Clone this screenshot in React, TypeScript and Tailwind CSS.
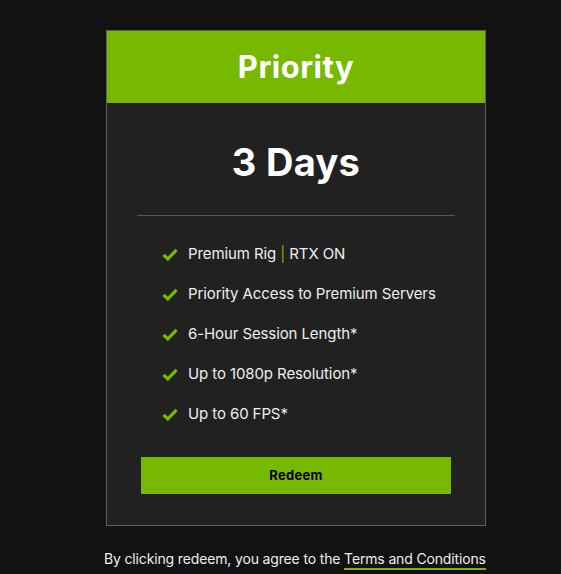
import React from "react";

const features: { text: React.ReactNode }[] = [
  {
    text: (
      <>
        Premium Rig <span className="text-[#76b900]">|</span> RTX ON
      </>
    ),
  },
  { text: "Priority Access to Premium Servers" },
  { text: "6-Hour Session Length*" },
  { text: "Up to 1080p Resolution*" },
  { text: "Up to 60 FPS*" },
];

const Check = () => (
  <svg width="16" height="13" viewBox="0 0 16 13" className="shrink-0">
    <path d="M1.5 6.8 L5.8 11 L14.5 1.8" fill="none" stroke="#76b900" strokeWidth="3.2" />
  </svg>
);

const App: React.FC = () => {
  return (
    <div
      className="w-[561px] h-[574px] bg-[#121212] text-white pl-[106px] pt-[30px]"
      style={{ fontFamily: "Inter, 'Noto Sans', sans-serif" }}
    >
      <div className="w-[380px] border border-[#5f5f5f] bg-[#212121]">
        <div className="h-[72px] bg-[#76b900] flex items-center justify-center">
          <h1 className="text-[31px] font-bold tracking-[0.5px]">Priority</h1>
        </div>
        <div className="flex flex-col items-center">
          <h2 className="text-[38px] font-bold mt-[35px] leading-[48px] tracking-[0.3px]">3 Days</h2>
          <div className="w-[318px] border-t border-[#555] mt-[29px]"></div>
          <ul className="w-full pl-[55px] mt-[28px] flex flex-col gap-[20px]">
            {features.map((f, i) => (
              <li key={i} className="flex items-center gap-[10px] text-[15px] leading-[20px] text-[#eee] tracking-[-0.1px]">
                <Check />
                <span>{f.text}</span>
              </li>
            ))}
          </ul>
          <button
            type="button"
            className="w-[310px] h-[37px] bg-[#76b900] text-black text-[13px] font-bold mt-[33px] mb-[31px] tracking-[0.3px]"
          >
            Redeem
          </button>
        </div>
      </div>
      <p className="text-[14px] mt-[22px] -ml-[2px] text-[#eee] tracking-[-0.15px] whitespace-nowrap">
        By clicking redeem, you agree to the{" "}
        <span className="border-b-2 border-[#76b900] pb-[1px]">Terms and Conditions</span>
      </p>
    </div>
  );
};

export default App;
